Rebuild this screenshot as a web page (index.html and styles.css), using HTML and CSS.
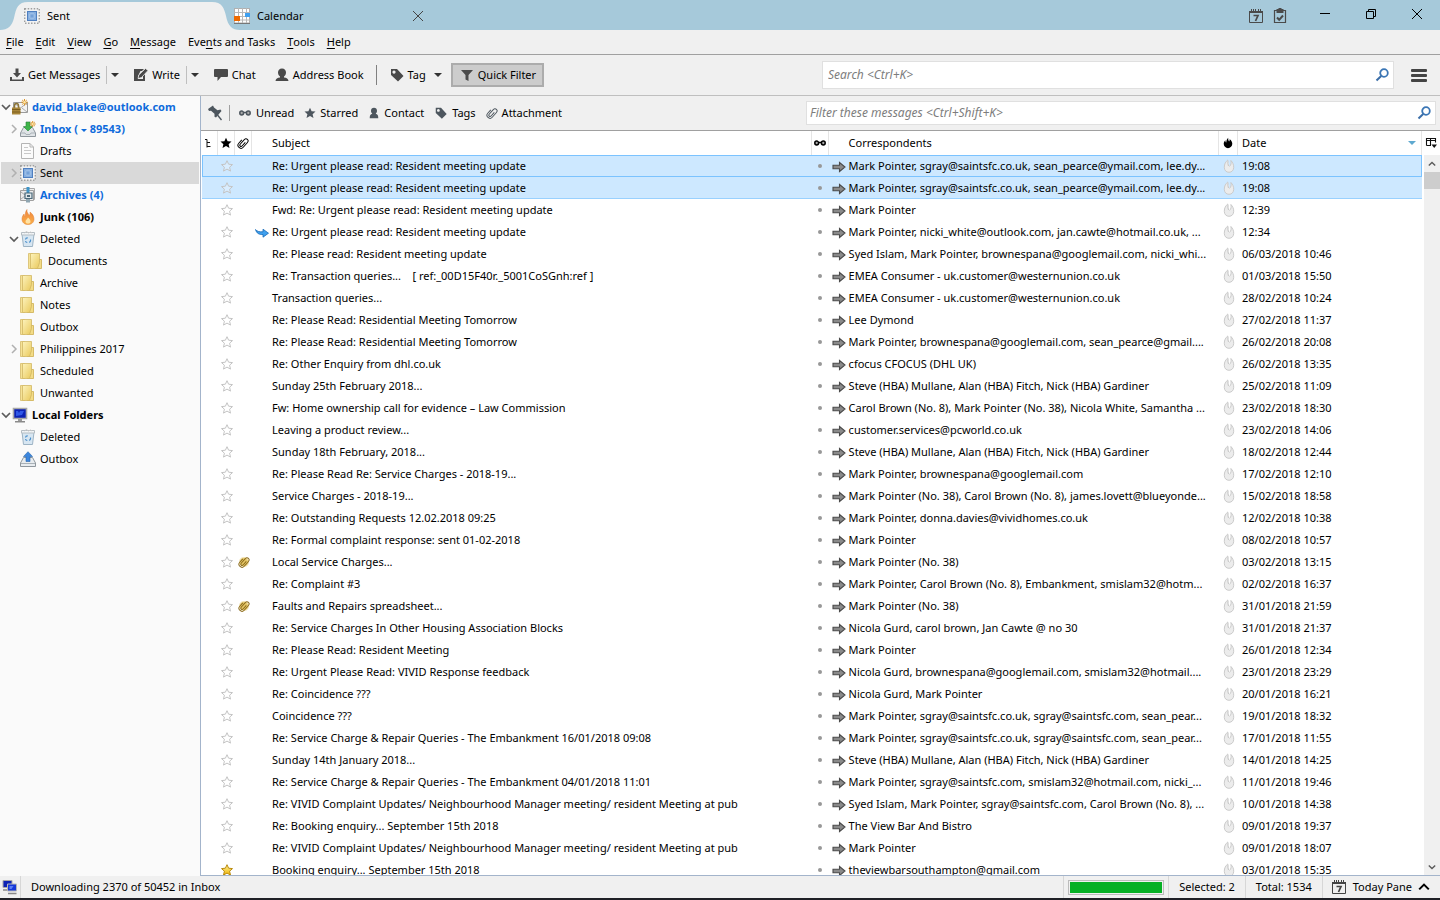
FILE: index.html
```html
<!DOCTYPE html>
<html lang="en">
<head>
    <meta charset="UTF-8">
    <meta name="viewport" content="width=device-width, initial-scale=1.0">
    <title>Sent - Mail</title>
    <link rel="stylesheet" href="styles.css">
</head>
<body>
    <!-- Shared icons -->
    <svg class="sprite" aria-hidden="true">
        <defs>
            <linearGradient id="g-folder" x1="0" y1="0" x2="1" y2="1"><stop offset="0" stop-color="#fdf3bd"/><stop offset="1" stop-color="#e9c95c"/></linearGradient>
            <linearGradient id="g-flame" x1="0" y1="0" x2="0" y2="1"><stop offset="0" stop-color="#f0843c"/><stop offset="1" stop-color="#f9b04a"/></linearGradient>
            <linearGradient id="g-star" x1="0" y1="0" x2="0" y2="1"><stop offset="0" stop-color="#fff3a0"/><stop offset="1" stop-color="#f0b400"/></linearGradient>
        </defs>
        <symbol id="i-sent" viewBox="0 0 16 16">
            <rect x=".7" y=".7" width="14.6" height="14.6" fill="#f2f2f2" stroke="#a0a0a0" stroke-width="1.400" stroke-dasharray="1.500 1.500"/>
            <rect x="3.500" y="3.500" width="9" height="9" fill="#86aedf" stroke="#4f7fc0"/>
            <circle cx="8" cy="8" r="2.800" fill="none" stroke="#a5c4ea" stroke-width=".8"/>
            <circle cx="8" cy="8" r="1" fill="#6f9cd6"/>
        </symbol>
        <symbol id="i-calendar" viewBox="0 0 16 16">
            <rect x=".5" y=".5" width="15" height="14.500" fill="#fff" stroke="#b0b0b0"/>
            <path d="M0 4.500h16M0 8.500h16M0 12h16M4.500 0v15M8.500 0v15M12.500 0v15" stroke="#b8b8b8"/>
            <path d="M0 15.500h16" stroke="#777"/>
            <path d="M0 8h6v5H0z" fill="#ee6a00"/><path d="M11 5h5v4h-5z" fill="#3fa0f0"/>
        </symbol>
        <symbol id="i-day" viewBox="0 0 16 16">
            <path d="M1.500 3v11.500h13V3" fill="none" stroke="currentColor"/>
            <path d="M1 3h14v2H1z" fill="currentColor"/>
            <path d="M3.500 1v2M5.500 1v2M7.500 1v2M10.500 1v2M12.500 1v2" stroke="currentColor"/>
            <path d="M5.500 7.500h4.500L7.500 13" fill="none" stroke="currentColor" stroke-width="1.700"/>
        </symbol>
        <symbol id="i-tasks" viewBox="0 0 16 16">
            <path d="M2.500 2.500v12h11v-12z" fill="none" stroke="currentColor" stroke-width="1.200"/>
            <path d="M4.500 1h2V0h3v1h2v4h-7z" fill="currentColor"/>
            <path d="M5 9.500l2.200 2.300L11 7.500" fill="none" stroke="currentColor" stroke-width="2"/>
        </symbol>
        <symbol id="i-close" viewBox="0 0 12 12"><path d="M1 1l10 10M11 1L1 11" stroke="currentColor" fill="none"/></symbol>
        <symbol id="i-min" viewBox="0 0 12 12"><path d="M1 5.500h10" stroke="currentColor"/></symbol>
        <symbol id="i-restore" viewBox="0 0 12 12"><path d="M1.500 3.500h7v7h-7zM3.500 3.500v-2h7v7h-2" stroke="currentColor" fill="none"/></symbol>
        <symbol id="i-get" viewBox="0 0 16 16">
            <path d="M1 10h2v2.500h10V10h2v4H1z" fill="currentColor"/>
            <path d="M6.500 1.500h3V6H12l-4 4.500L4 6h2.500z" fill="currentColor"/>
        </symbol>
        <symbol id="i-write" viewBox="0 0 16 16">
            <path d="M1 2h10L9 4H3v8h7V9l2-2v7H1z" fill="currentColor"/>
            <path d="M2 3h6l-3 6v4H2z" fill="currentColor"/>
            <path d="M5 11.500l.8-3.500L12.500 1.500l2.500 2L8.500 10.500z" fill="currentColor" stroke="#f0f0f0" stroke-width=".7"/>
        </symbol>
        <symbol id="i-chat" viewBox="0 0 16 16"><path d="M2 2h12q1 0 1 1v6q0 1-1 1H8l-3.500 4V10H2q-1 0-1-1V3q0-1 1-1z" fill="currentColor"/></symbol>
        <symbol id="i-person" viewBox="0 0 16 16"><path d="M8 1.500c2.600 0 4 1.700 4 4 0 1.800-.9 3.400-2 4v1c2.500.3 4.300 1 4.500 3.500h-13c.2-2.500 2-3.200 4.500-3.500v-1c-1.100-.6-2-2.200-2-4 0-2.300 1.400-4 4-4z" fill="currentColor"/></symbol>
        <symbol id="i-contact" viewBox="0 0 14 14"><path d="M7 1c2.200 0 3.500 1.500 3.500 3.500 0 1.600-.6 2.500-1.500 3.500 2 .5 3 2 3 5H2c0-3 1-4.500 3-5-.9-1-1.500-1.900-1.500-3.500C3.500 2.500 4.800 1 7 1z" fill="currentColor"/></symbol>
        <symbol id="i-tag" viewBox="0 0 16 16"><path fill-rule="evenodd" d="M2 2h6l6.500 7L9 14.500 2 8zM5 3.500a1.600 1.600 0 1 0 .01 0z" fill="currentColor"/></symbol>
        <symbol id="i-filter" viewBox="0 0 16 16"><path d="M2 3h12L9.500 8v6l-3-1.500V8z" fill="currentColor"/></symbol>
        <symbol id="i-search" viewBox="0 0 16 16">
            <circle cx="10" cy="6" r="3.800" fill="none" stroke="#3b76b5" stroke-width="1.800"/>
            <path d="M7.200 9L2.500 13.500" stroke="#3b6ea8" stroke-width="2"/>
        </symbol>
        <symbol id="i-pin" viewBox="0 0 16 16">
            <path d="M1 4l5-3.500 1 2 3.500 2.800 3-.8 1 1.500-5.500 6.500-1.500-.8v-3L4 5.800 2 6z" fill="#4d565e"/>
            <path d="M10.500 10l4 5" stroke="#4d565e" stroke-width="1.300"/>
        </symbol>
        <symbol id="i-glasses" viewBox="0 0 14 14">
            <circle cx="3.700" cy="7" r="1.900" fill="#aaa" stroke="currentColor" stroke-width="1.500"/>
            <circle cx="10.300" cy="7" r="1.900" fill="#aaa" stroke="currentColor" stroke-width="1.500"/>
            <path d="M5.500 6.500h3" stroke="currentColor" stroke-width="1.500"/>
        </symbol>
        <symbol id="i-star" viewBox="0 0 12 12"><path d="M6 .7l1.600 3.500 3.900.4-2.900 2.600.9 3.900L6 9.100l-3.500 2 .9-3.900L.5 4.600l3.900-.4z"/></symbol>
        <symbol id="i-clip" viewBox="0 0 12 12">
            <g fill="none" stroke="currentColor" transform="rotate(42 6 6)">
                <path d="M3 4.500V9q0 3 3 3t3-3V3Q9 .3 6.800.300T4.700 3v5.500q0 1.600 1.300 1.600t1.300-1.600V4"/>
            </g>
        </symbol>
        <symbol id="i-thread" viewBox="0 0 12 12"><path d="M1 2.500h2v8M3 5.500h3M3 9.500h3.500" fill="none" stroke="#111"/></symbol>
        <symbol id="i-flame" viewBox="0 0 12 14"><path d="M6.300 1c-.3 2 .2 3.600 1 4.200.6-.6.800-1.500.6-2.600C9.800 3.800 11 5.600 11 8c0 3-2.200 5-5 5S1 11 1 8c0-2 .9-3.400 2-4.300-.1 1.500.2 2.400 1 2.800C4.100 4.300 4.800 2.200 6.300 1z" fill="currentColor"/></symbol>
        <symbol id="i-mouse" viewBox="0 0 12 14">
            <path d="M5 .8C2.500 2.800 1.300 5 1.300 8.300c0 3 1.900 5 4.700 5s4.700-2 4.700-5c0-3-1-4.800-2.800-6.800.5 2.500.2 4.500-1.400 6" fill="#ececec" stroke="#cbcbcb"/>
            <path d="M5 1.500q-.5 3.500.500 5.500" fill="none" stroke="#c6c6c6"/>
        </symbol>
        <symbol id="i-columns" viewBox="0 0 12 12">
            <path d="M1.500 8.500v-7h9v4M1 3.500h9.500M5.500 1.500v7M1.500 8.500H6" fill="none" stroke="#111" stroke-width="1.100"/>
            <path d="M6.500 7.500h5.500L9.200 11z" fill="#111"/>
        </symbol>
        <symbol id="i-arrow" viewBox="0 0 14 12"><path d="M1 4.200h6.500V1.500L13 6l-5.500 4.500V7.800H1z" fill="#8a8a8a" stroke="#4a4a4a" stroke-width="1.100"/></symbol>
        <symbol id="i-forwarded" viewBox="0 0 14 10"><path d="M.5 1.500C2 3.500 4.500 4 8 3.800V1.200l5.500 4-5.500 4V6.500C4.500 6.800 1.500 5.500.5 1.500z" fill="#3fa0ee" stroke="#1769b8" stroke-width=".8"/></symbol>
        <symbol id="i-open" viewBox="0 0 10 10"><path d="M1 3l4 4 4-4" fill="none" stroke="#5b5b5b" stroke-width="1.700"/></symbol>
        <symbol id="i-shut" viewBox="0 0 10 10"><path d="M3 1l4 4-4 4" fill="none" stroke="#b0b0b0" stroke-width="1.500"/></symbol>
        <symbol id="i-up" viewBox="0 0 10 10"><path d="M1 7l4-4 4 4" fill="none" stroke="currentColor" stroke-width="1.700"/></symbol>
        <symbol id="i-account" viewBox="0 0 16 16">
            <path d="M1.500 3.500h14v10h-14z" fill="#f3f3f3" stroke="#9a9a9a"/><path d="M2 4l6.500 5L15 4M10 9l5 4" fill="none" stroke="#aaa"/>
            <path d="M2.500 9V7q0-2.500 2-2.500t2 2.500v2" fill="none" stroke="#8c7638" stroke-width="1.500"/>
            <path d="M0 8.500h8.500v7H0z" fill="#a8863a"/><path d="M0 10.500h8.500M0 13h8.500" stroke="#7c5e1c"/>
            <path d="M12.500 0v6.500M9.300 3.200h6.500M10.200 1l4.600 4.500M14.800 1l-4.600 4.500" stroke="#dd9325"/><circle cx="12.500" cy="3.200" r="1.200" fill="#ffe9a8"/>
        </symbol>
        <symbol id="i-inbox" viewBox="0 0 16 16">
            <path d="M3.500 6.500h9l3 5.500v3.500H.5V12z" fill="#dfe3e6" stroke="#8f979d"/><path d="M1 12h4l1 1.500h4l1-1.500h4" fill="none" stroke="#a9b1b7"/>
            <path d="M6 1h4v4.500h2.500L8 10 3.500 5.500H6z" fill="#3fb54a" stroke="#27803a" stroke-width=".6"/>
            <path d="M12.700 0v6M9.700 3h6M10.600 1l4.200 4M14.800 1l-4.200 4" stroke="#dd9325"/><circle cx="12.700" cy="3" r="1.100" fill="#ffe9a8"/>
        </symbol>
        <symbol id="i-drafts" viewBox="0 0 16 16">
            <path d="M1.500.5h8.500l3.500 3.500v11.500h-12z" fill="#fbfbfb" stroke="#b4b4b4"/><path d="M10 .5V4h3.500" fill="none" stroke="#b4b4b4"/>
            <path d="M4 4.500h4M4 7.500h7M4 10.500h7" stroke="#c8c8c8"/>
        </symbol>
        <symbol id="i-archives" viewBox="0 0 16 16">
            <path d="M3.500 1.500h11v11h-11z" fill="#eee" stroke="#a6a6a6"/><path d="M.5 3.500h13v10H.5z" fill="#ececec" stroke="#a0a0a0"/>
            <path d="M1 5l4 3M1 12l4-3" stroke="#aaa"/>
            <path d="M6.500 0h3v6h-3z" fill="#3f95c8"/><path d="M5 6h7v5.500H5z" fill="#dfe7ea" stroke="#4b6878" stroke-width="1.200"/><path d="M7 8h3v2H7z" fill="#4b6878"/>
            <path d="M6 12h4v3.500H6z" fill="#8fa5b0"/>
        </symbol>
        <symbol id="i-junk" viewBox="0 0 16 16">
            <path d="M7 .5c-.5 3 1.500 4 2 6 1-.8 1.300-2 1-3.500 2.500 1.800 4 4.200 4 7 0 3.500-2.500 5.500-6 5.500s-6-2-6-5.500c0-2.500 1.300-4 2-5 .2 1.300.5 2 1.200 2.500C5 5 5.500 2.500 7 .5z" fill="url(#g-flame)" stroke="#de8038" stroke-width=".5"/>
            <path d="M8 8.500c1.500 1.500 2.500 2.500 2.500 4S9.500 14.500 8 14.500s-2.500-.5-2.500-2S7 10.500 8 8.500z" fill="#ffe3a6"/>
        </symbol>
        <symbol id="i-trash" viewBox="0 0 16 16">
            <path d="M2 3h12l-1.500 12.500h-9z" fill="#d7e6f2" stroke="#9db3c4"/><path d="M1.500 1.500h13v2.500h-13z" fill="#f2f5f7" stroke="#b5bdc3"/>
            <path d="M4.500 2l2-1.500 2 1.500 2-1 1.500 1" fill="none" stroke="#c7c7c7"/>
            <path d="M5.500 8.500q.3-1.800 2.300-1.500M10.500 8.500q.4 2.500-1.500 2.700M5.500 10q.3 1.500 1.800 1.500" fill="none" stroke="#4a8fcb" stroke-width="1.200"/>
        </symbol>
        <symbol id="i-folder" viewBox="0 0 16 16">
            <path d="M8.500 6.500h5v9h-6z" fill="#f3dc86" stroke="#cdae52" stroke-width=".8"/>
            <path d="M.5.500h4v15h-4z" fill="#f6e396" stroke="#d6bb69" stroke-width=".8"/>
            <path d="M2.500.500h9v9l-2 6h-7z" fill="url(#g-folder)" stroke="#d2b765" stroke-width=".8"/>
        </symbol>
        <symbol id="i-computer" viewBox="0 0 16 16">
            <path d="M1.500 1.500h13v10h-13z" fill="#0c22b4" stroke="#a8a8a8" stroke-width="1.600"/><path d="M4 9V4h2l1 2 1-2h4L10 8z" fill="#3058e8"/>
            <path d="M6 12h4v2H6z" fill="#999"/><path d="M3 14h10v1.500H3z" fill="#8a8a8a"/>
        </symbol>
        <symbol id="i-outbox" viewBox="0 0 16 16">
            <path d="M3.500 6.500h9l3 5.500v3.500H.5V12z" fill="#e8ecef" stroke="#8f979d"/><path d="M1 12.500h14" stroke="#a9b1b7"/>
            <path d="M6 10.500V5.500H3.500L8 .7l4.500 4.800H10v5z" fill="#3c86dd" stroke="#2564ae" stroke-width=".6"/>
        </symbol>
        <symbol id="i-network" viewBox="0 0 16 16">
            <path d="M1 1.500h9v7H1z" fill="#0c22b4" stroke="#a8a8a8"/><path d="M1 11h4" stroke="#888" stroke-width="1.500"/>
            <path d="M5.500 5h9v7h-9z" fill="#1638d8" stroke="#b5b5b5"/><path d="M7.500 7h4l-2 3h-2z" fill="#5a7ef5"/><path d="M6 14.500h8.500" stroke="#888" stroke-width="1.500"/>
        </symbol>
    </svg>

    <header class="titlebar">
        <div class="tab tab-active">
            <svg class="icon"><use href="#i-sent"/></svg>
            <span>Sent</span>
        </div>
        <div class="tab">
            <svg class="icon"><use href="#i-calendar"/></svg>
            <span>Calendar</span>
            <button class="tab-close" aria-label="Close tab"><svg class="icon-s"><use href="#i-close"/></svg></button>
        </div>
        <div class="tab-tools">
            <button aria-label="Calendar"><svg class="icon"><use href="#i-day"/></svg></button>
            <button aria-label="Tasks"><svg class="icon"><use href="#i-tasks"/></svg></button>
        </div>
        <div class="window-buttons">
            <button aria-label="Minimize"><svg class="icon-s"><use href="#i-min"/></svg></button>
            <button aria-label="Restore"><svg class="icon-s"><use href="#i-restore"/></svg></button>
            <button aria-label="Close"><svg class="icon-s"><use href="#i-close"/></svg></button>
        </div>
    </header>

    <nav class="menubar">
        <button><u>F</u>ile</button>
        <button><u>E</u>dit</button>
        <button><u>V</u>iew</button>
        <button><u>G</u>o</button>
        <button><u>M</u>essage</button>
        <button>Eve<u>n</u>ts and Tasks</button>
        <button><u>T</u>ools</button>
        <button><u>H</u>elp</button>
    </nav>

    <div class="toolbar">
        <button class="tool"><svg class="icon"><use href="#i-get"/></svg>Get Messages</button>
        <button class="drop split" aria-label="Get messages options"></button>
        <button class="tool"><svg class="icon"><use href="#i-write"/></svg>Write</button>
        <button class="drop split" aria-label="Write options"></button>
        <button class="tool"><svg class="icon"><use href="#i-chat"/></svg>Chat</button>
        <button class="tool"><svg class="icon"><use href="#i-person"/></svg>Address Book</button>
        <span class="separator"></span>
        <button class="tool"><svg class="icon"><use href="#i-tag"/></svg>Tag</button>
        <button class="drop" aria-label="Tag options"></button>
        <button class="tool pressed"><svg class="icon"><use href="#i-filter"/></svg>Quick Filter</button>
        <label class="search global-search">
            <input type="text" placeholder="Search &lt;Ctrl+K&gt;" aria-label="Search">
            <svg class="icon"><use href="#i-search"/></svg>
        </label>
        <button class="app-menu" aria-label="Menu"><span></span><span></span><span></span></button>
    </div>

    <div class="workspace">
        <aside class="folder-pane">
            <ul id="folder-tree" class="folder-tree"></ul>
        </aside>

        <main class="mail-pane">
            <div class="filter-bar">
                <button class="pin" aria-label="Keep filters"><svg class="icon"><use href="#i-pin"/></svg></button>
                <button><svg class="icon-m"><use href="#i-glasses"/></svg>Unread</button>
                <button><svg class="icon-s"><use href="#i-star"/></svg>Starred</button>
                <button><svg class="icon-s"><use href="#i-contact"/></svg>Contact</button>
                <button><svg class="icon-m"><use href="#i-tag"/></svg>Tags</button>
                <button><svg class="icon-s"><use href="#i-clip"/></svg>Attachment</button>
                <label class="search filter-search">
                    <input type="text" placeholder="Filter these messages &lt;Ctrl+Shift+K&gt;" aria-label="Filter these messages">
                    <svg class="icon"><use href="#i-search"/></svg>
                </label>
            </div>

            <div class="message-list">
                <div class="message-rows">
                    <table>
                        <colgroup>
                            <col class="col-thread"><col class="col-icon"><col class="col-icon"><col>
                            <col class="col-icon"><col class="col-people"><col class="col-junk"><col class="col-date">
                        </colgroup>
                        <thead>
                            <tr>
                                <th aria-label="Thread"><svg class="icon-s"><use href="#i-thread"/></svg></th>
                                <th aria-label="Starred"><svg class="icon-s"><use href="#i-star"/></svg></th>
                                <th aria-label="Attachment"><svg class="icon-s"><use href="#i-clip"/></svg></th>
                                <th class="subject">Subject</th>
                                <th aria-label="Read"><svg class="icon-m"><use href="#i-glasses"/></svg></th>
                                <th class="people">Correspondents</th>
                                <th aria-label="Junk"><svg class="icon-s"><use href="#i-flame"/></svg></th>
                                <th class="date"><span>Date<i class="sort"></i></span></th>
                            </tr>
                        </thead>
                        <tbody id="messages"></tbody>
                    </table>
                </div>
                <div class="list-side">
                    <button class="picker" aria-label="Select columns"><svg class="icon-s"><use href="#i-columns"/></svg></button>
                    <div class="scrollbar">
                        <button aria-label="Scroll up"><svg><use href="#i-up"/></svg></button>
                        <div class="thumb"></div>
                        <button aria-label="Scroll down" class="down"><svg><use href="#i-open"/></svg></button>
                    </div>
                </div>
            </div>
        </main>
    </div>

    <footer class="statusbar">
        <span class="cell online"><svg class="icon"><use href="#i-network"/></svg></span>
        <span class="cell status-text">Downloading 2370 of 50452 in Inbox</span>
        <span class="cell progress-cell"><span class="progress"></span></span>
        <span class="cell">Selected: 2</span>
        <span class="cell">Total: 1534</span>
        <button class="today"><svg class="icon"><use href="#i-day"/></svg>Today Pane<svg class="caret"><use href="#i-up"/></svg></button>
    </footer>

    <script>
        // [level, twisty, icon, label, extra class]
        const folders = [
            [0, 'open', 'account', 'david_blake@outlook.com', 'new'],
            [1, 'shut', 'inbox', 'Inbox ( <i class="mini"></i> 89543)', 'new'],
            [1, '', 'drafts', 'Drafts', ''],
            [1, 'shut', 'sent', 'Sent', 'selected'],
            [1, '', 'archives', 'Archives (4)', 'new'],
            [1, '', 'junk', 'Junk (106)', 'bold'],
            [1, 'open', 'trash', 'Deleted', ''],
            [2, '', 'folder', 'Documents', ''],
            [1, '', 'folder', 'Archive', ''],
            [1, '', 'folder', 'Notes', ''],
            [1, '', 'folder', 'Outbox', ''],
            [1, 'shut', 'folder', 'Philippines 2017', ''],
            [1, '', 'folder', 'Scheduled', ''],
            [1, '', 'folder', 'Unwanted', ''],
            [0, 'open', 'computer', 'Local Folders', 'bold'],
            [1, '', 'trash', 'Deleted', ''],
            [1, '', 'outbox', 'Outbox', '']
        ];

        // [subject, correspondents, date, flags]
        const messages = [
            ['Re: Urgent please read: Resident meeting update', 'Mark Pointer, sgray@saintsfc.co.uk, sean_pearce@ymail.com, lee.dy...', '19:08', 'selected focused'],
            ['Re: Urgent please read: Resident meeting update', 'Mark Pointer, sgray@saintsfc.co.uk, sean_pearce@ymail.com, lee.dy...', '19:08', 'selected'],
            ['Fwd: Re: Urgent please read: Resident meeting update', 'Mark Pointer', '12:39', ''],
            ['Re: Urgent please read: Resident meeting update', 'Mark Pointer, nicki_white@outlook.com, jan.cawte@hotmail.co.uk, ...', '12:34', 'forwarded'],
            ['Re: Please read: Resident meeting update', 'Syed Islam, Mark Pointer, brownespana@googlemail.com, nicki_whi...', '06/03/2018 10:46', ''],
            ['Re: Transaction queries...&nbsp;&nbsp;&nbsp; [ ref:_00D15F40r._5001CoSGnh:ref ]', 'EMEA Consumer - uk.customer@westernunion.co.uk', '01/03/2018 15:50', ''],
            ['Transaction queries...', 'EMEA Consumer - uk.customer@westernunion.co.uk', '28/02/2018 10:24', ''],
            ['Re: Please Read: Residential Meeting Tomorrow', 'Lee Dymond', '27/02/2018 11:37', ''],
            ['Re: Please Read: Residential Meeting Tomorrow', 'Mark Pointer, brownespana@googlemail.com, sean_pearce@gmail....', '26/02/2018 20:08', ''],
            ['Re: Other Enquiry from dhl.co.uk', 'cfocus CFOCUS (DHL UK)', '26/02/2018 13:35', ''],
            ['Sunday 25th February 2018...', 'Steve (HBA) Mullane, Alan (HBA) Fitch, Nick (HBA) Gardiner', '25/02/2018 11:09', ''],
            ['Fw: Home ownership call for evidence – Law Commission', 'Carol Brown (No. 8), Mark Pointer (No. 38), Nicola White, Samantha ...', '23/02/2018 18:30', ''],
            ['Leaving a product review...', 'customer.services@pcworld.co.uk', '23/02/2018 14:06', ''],
            ['Sunday 18th February, 2018...', 'Steve (HBA) Mullane, Alan (HBA) Fitch, Nick (HBA) Gardiner', '18/02/2018 12:44', ''],
            ['Re: Please Read Re: Service Charges - 2018-19...', 'Mark Pointer, brownespana@googlemail.com', '17/02/2018 12:10', ''],
            ['Service Charges - 2018-19...', 'Mark Pointer (No. 38), Carol Brown (No. 8), james.lovett@blueyonde...', '15/02/2018 18:58', ''],
            ['Re: Outstanding Requests 12.02.2018 09:25', 'Mark Pointer, donna.davies@vividhomes.co.uk', '12/02/2018 10:38', ''],
            ['Re: Formal complaint response: sent 01-02-2018', 'Mark Pointer', '08/02/2018 10:57', ''],
            ['Local Service Charges...', 'Mark Pointer (No. 38)', '03/02/2018 13:15', 'attached'],
            ['Re: Complaint #3', 'Mark Pointer, Carol Brown (No. 8), Embankment, smislam32@hotm...', '02/02/2018 16:37', ''],
            ['Faults and Repairs spreadsheet...', 'Mark Pointer (No. 38)', '31/01/2018 21:59', 'attached'],
            ['Re: Service Charges In Other Housing Association Blocks', 'Nicola Gurd, carol brown, Jan Cawte @ no 30', '31/01/2018 21:37', ''],
            ['Re: Please Read: Resident Meeting', 'Mark Pointer', '26/01/2018 12:34', ''],
            ['Re: Urgent Please Read: VIVID Response feedback', 'Nicola Gurd, brownespana@googlemail.com, smislam32@hotmail....', '23/01/2018 23:29', ''],
            ['Re: Coincidence ???', 'Nicola Gurd, Mark Pointer', '20/01/2018 16:21', ''],
            ['Coincidence ???', 'Mark Pointer, sgray@saintsfc.co.uk, sgray@saintsfc.com, sean_pear...', '19/01/2018 18:32', ''],
            ['Re: Service Charge &amp; Repair Queries - The Embankment 16/01/2018 09:08', 'Mark Pointer, sgray@saintsfc.co.uk, sgray@saintsfc.com, sean_pear...', '17/01/2018 11:55', ''],
            ['Sunday 14th January 2018...', 'Steve (HBA) Mullane, Alan (HBA) Fitch, Nick (HBA) Gardiner', '14/01/2018 14:25', ''],
            ['Re: Service Charge &amp; Repair Queries - The Embankment 04/01/2018 11:01', 'Mark Pointer, sgray@saintsfc.com, smislam32@hotmail.com, nicki_...', '11/01/2018 19:46', ''],
            ['Re: VIVID Complaint Updates/ Neighbourhood Manager meeting/ resident Meeting at pub', 'Syed Islam, Mark Pointer, sgray@saintsfc.com, Carol Brown (No. 8), ...', '10/01/2018 14:38', ''],
            ['Re: Booking enquiry... September 15th 2018', 'The View Bar And Bistro', '09/01/2018 19:37', ''],
            ['Re: VIVID Complaint Updates/ Neighbourhood Manager meeting/ resident Meeting at pub', 'Mark Pointer', '09/01/2018 18:07', ''],
            ['Booking enquiry... September 15th 2018', 'theviewbarsouthampton@gmail.com', '03/01/2018 15:35', 'starred']
        ];

        function icon(name, cls) {
            return `<svg class="${cls}"><use href="#i-${name}"/></svg>`;
        }

        document.getElementById('folder-tree').innerHTML = folders.map(([level, twisty, name, label, cls]) => `
            <li class="level-${level} ${cls}">
                <span class="twisty">${twisty ? icon(twisty, '') : ''}</span>
                ${icon(name, 'icon')}<span>${label}</span>
            </li>`).join('');

        document.getElementById('messages').innerHTML = messages.map(([subject, people, date, flags]) => `
            <tr class="${flags}">
                <td></td>
                <td>${icon('star', 'icon-s star')}</td>
                <td>${flags.includes('attached') ? icon('clip', 'icon-s clip') : ''}</td>
                <td class="subject"><span class="lead">${flags.includes('forwarded') ? icon('forwarded', 'mark') : ''}</span>${subject}</td>
                <td><span class="dot"></span></td>
                <td class="people"><span class="lead">${icon('arrow', 'mark')}</span>${people}</td>
                <td>${icon('mouse', 'icon-m')}</td>
                <td class="date">${date}</td>
            </tr>`).join('');
    </script>
</body>
</html>
```
FILE: styles.css
```css
* {
    box-sizing: border-box;
}

body {
    margin: 0;
    height: 100vh;
    display: flex;
    flex-direction: column;
    overflow: hidden;
    background: #f0f0f0;
    border-bottom: 2px solid #1f2026;
    color: #000;
    font-family: "Noto Sans", "Open Sans", sans-serif;
    font-size: 11px;
    line-height: 16px;
}

button {
    display: flex;
    align-items: center;
    padding: 0;
    border: 0;
    background: none;
    color: inherit;
    font: inherit;
    white-space: nowrap;
}

.sprite {
    position: absolute;
    width: 0;
    height: 0;
}

svg {
    display: block;
    flex: none;
}

.icon {
    width: 16px;
    height: 16px;
}

.icon-m {
    width: 14px;
    height: 14px;
}

.icon-s {
    width: 12px;
    height: 12px;
}

/* Title bar */
.titlebar {
    display: flex;
    height: 30px;
    background: #a6c9da;
}

.tab {
    display: flex;
    align-items: center;
    gap: 7px;
    width: 190px;
    margin-left: -6px;
    padding-top: 2px;
}

.tab-active {
    width: 240px;
    margin-left: 0;
    padding-left: 24px;
    background: #f0f0f0;
    clip-path: path("M0 30C8 30 12 26 14 18C16 8 18 2 28 2H212C222 2 224 8 226 16C228 26 232 30 240 30Z");
}

.tab-close {
    margin-left: auto;
    color: #444;
}

.tab-tools {
    display: flex;
    margin-left: auto;
    margin-right: 10px;
    padding-top: 2px;
    color: #4a4a4a;
}

.tab-tools button {
    width: 24px;
    justify-content: center;
}

.window-buttons {
    display: flex;
}

.window-buttons button {
    width: 46px;
    height: 28px;
    justify-content: center;
}

/* Menus and main toolbar */
.menubar {
    display: flex;
    height: 25px;
    border-bottom: 1px solid #a0a0a0;
}

.menubar button {
    padding: 0 6px;
}

.menubar u {
    text-underline-offset: 2px;
}

.toolbar {
    display: flex;
    align-items: center;
    height: 41px;
    padding: 0 13px 0 3px;
    border-bottom: 1px solid #bfbfbf;
}

.tool {
    height: 24px;
    gap: 3px;
    padding: 0 6px;
}

.tool + .tool {
    margin-left: 6px;
}

.tool .icon {
    color: #4a4a4a;
}

.drop {
    width: 13px;
    height: 18px;
    justify-content: center;
}

.drop::before {
    content: "";
    border: 4px solid transparent;
    border-top-color: #333;
    border-bottom: 0;
}

.split {
    width: 17px;
    margin-right: 4px;
    border-left: 1px solid #bfbfbf;
}

.separator {
    width: 1px;
    height: 20px;
    margin: 0 6px;
    background: #808080;
}

.pressed {
    margin-left: 6px;
    border: 2px solid #acacac;
    background: #cccccc;
}

.search {
    display: flex;
    align-items: center;
    margin-left: auto;
    padding-right: 3px;
    border: 1px solid #e0e0e0;
    background: #fff;
}

.search input {
    flex: 1;
    min-width: 0;
    padding: 0 5px;
    border: 0;
    outline: 0;
    font: inherit;
    font-size: 12px;
}

.search input::placeholder {
    color: #7d7d7d;
    font-style: italic;
}

.global-search {
    width: 572px;
    height: 28px;
}

.app-menu {
    flex-direction: column;
    gap: 2px;
    margin-left: 17px;
}

.app-menu span {
    width: 16px;
    height: 3px;
    border-radius: 1px;
    background: #444;
}

/* Folder pane */
.workspace {
    display: flex;
    flex: 1;
    min-height: 0;
}

.folder-pane {
    width: 201px;
    border-right: 1px solid #a3b4cb;
    background: #fafafa;
}

.folder-tree {
    margin: 0;
    padding: 0 1px;
    list-style: none;
}

.folder-tree li {
    display: flex;
    align-items: center;
    height: 22px;
    white-space: nowrap;
}

.folder-tree .icon {
    margin-right: 4px;
}

.twisty {
    width: 11px;
}

.twisty svg {
    width: 10px;
    height: 10px;
}

.folder-tree .level-1 {
    padding-left: 8px;
}

.folder-tree .level-2 {
    padding-left: 16px;
}

.folder-tree .new {
    color: #0f6bdc;
    font-weight: bold;
}

.folder-tree .bold {
    font-weight: bold;
}

.folder-tree .selected {
    background: #d9d9d9;
}

.mini {
    display: inline-block;
    border: 3px solid transparent;
    border-top-color: currentColor;
    border-bottom: 0;
    vertical-align: middle;
}

/* Quick filter bar */
.mail-pane {
    display: flex;
    flex-direction: column;
    flex: 1;
    min-width: 0;
    background: #fff;
}

.filter-bar {
    display: flex;
    align-items: center;
    height: 35px;
    padding: 0 4px 0 6px;
    border-bottom: 1px solid #a0a0a0;
    background: #f0f0f0;
}

.filter-bar button {
    gap: 4px;
    margin-right: 10px;
}

.filter-bar button svg {
    color: #4d565e;
    fill: #4d565e;
}

.filter-bar .pin {
    height: 16px;
    margin-right: 8px;
    padding-right: 6px;
    border-right: 1px solid #a0a0a0;
}

.filter-search {
    width: 630px;
    height: 24px;
}

.filter-search input {
    padding: 0 3px;
}

/* Message list */
.message-list {
    display: flex;
    flex: 1;
    min-height: 0;
    padding-left: 1px;
    border-bottom: 1px solid #a3b4cb;
}

.message-rows {
    flex: 1;
    min-width: 0;
    overflow: hidden;
}

table {
    width: 100%;
    table-layout: fixed;
    border-spacing: 0;
}

.col-thread {
    width: 16px;
}

.col-icon {
    width: 17px;
}

.col-people {
    width: 32%;
}

.col-junk {
    width: 19px;
}

.col-date {
    width: 184px;
}

th,
td {
    padding: 0;
    overflow: hidden;
    font-weight: normal;
    text-align: left;
    white-space: nowrap;
}

th {
    height: 24px;
    border-right: 1px solid #e5e5e5;
}

td {
    height: 22px;
}

th svg,
td svg {
    margin: 0 auto;
}

th.subject {
    padding-left: 20px;
}

th.people {
    padding-left: 20px;
}

.date {
    padding-left: 4px;
}

th.date span {
    display: flex;
    align-items: center;
    justify-content: space-between;
    padding-right: 5px;
}

.sort {
    border: 4px solid transparent;
    border-top-color: #5fa9d0;
    border-bottom: 0;
}

.lead {
    display: inline-block;
    width: 20px;
    vertical-align: middle;
}

.mark {
    width: 14px;
    height: 12px;
}

.star {
    fill: #fff;
    stroke: #c4c4c4;
    stroke-width: 1px;
}

.starred .star {
    fill: url(#g-star);
    stroke: #b98a10;
}

.clip {
    color: #8a6a1c;
    background: radial-gradient(#e6c766 40%, transparent 65%);
}

.dot {
    display: block;
    width: 4px;
    height: 4px;
    margin: 0 auto;
    border-radius: 2px;
    background: #989898;
}

tbody .selected {
    background: #cde8ff;
    box-shadow: inset 0 -1px #99d1ff;
}

tbody .selected .star {
    fill: #d9edff;
}

tbody .focused {
    box-shadow: inset 0 0 0 1px #7bc3ff;
}

.list-side {
    display: flex;
    flex-direction: column;
    width: 18px;
}

.picker {
    height: 24px;
    justify-content: center;
}

.scrollbar {
    display: flex;
    flex-direction: column;
    flex: 1;
    margin-left: 2px;
    background: #f0f0f0;
}

.scrollbar button {
    height: 17px;
    justify-content: center;
    color: #5b5b5b;
}

.scrollbar button svg {
    width: 8px;
    height: 8px;
}

.scrollbar .thumb {
    height: 17px;
    background: #cdcdcd;
}

.scrollbar .down {
    margin-top: auto;
}

/* Status bar */
.statusbar {
    display: flex;
    align-items: center;
    height: 22px;
}

.cell {
    display: flex;
    align-items: center;
    height: 22px;
    padding: 0 10px;
    border-right: 1px solid #d7d7d7;
}

.online {
    width: 21px;
    padding: 0 2px;
}

.status-text {
    flex: 1;
}

.progress-cell {
    padding: 0 4px;
}

.progress {
    width: 96px;
    height: 15px;
    padding: 1px;
    border: 1px solid #bcbcbc;
    background: #06b025 content-box;
}

.today {
    gap: 6px;
    padding: 0 10px 0 8px;
}

.today .icon {
    color: #444;
}

.caret {
    width: 12px;
    height: 12px;
}
```
